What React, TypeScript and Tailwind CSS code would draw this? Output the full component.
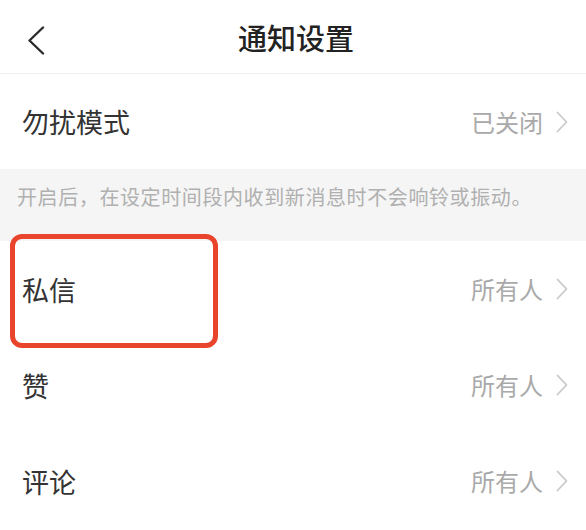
import React from "react";

const Chevron = () => (
  <svg width="12" height="22" viewBox="0 0 12 22" fill="none" className="shrink-0">
    <path d="M1.5 1.5 L10.5 11 L1.5 20.5" stroke="#c9c9c9" strokeWidth="1.8" strokeLinecap="round" strokeLinejoin="round" />
  </svg>
);

const Row = ({ label, value, h }: { label: string; value: string; h: string }) => (
  <div className={`flex items-center justify-between pl-[22px] pr-[18px] ${h}`}>
    <span className="text-[27px] leading-none text-[#333333]">{label}</span>
    <div className="flex items-center gap-[13px]">
      <span className="text-[24px] leading-none text-[#a9a9a9]">{value}</span>
      <Chevron />
    </div>
  </div>
);

export default function App() {
  return (
    <div
      className="relative w-[586px] h-[530px] bg-white overflow-hidden"
      style={{ fontFamily: '"Noto Sans CJK SC", "Noto Sans", sans-serif' }}
    >
      <div className="relative flex items-center justify-center h-[74px] border-b border-[#f2f2f2]">
        <svg width="18" height="30" viewBox="0 0 18 30" fill="none" className="absolute left-[27px] top-[26px]">
          <path d="M16 1.5 L2.5 14.5 L16 27.5" stroke="#2b2b2b" strokeWidth="2.4" strokeLinecap="round" strokeLinejoin="round" />
        </svg>
        <span className="text-[29px] leading-none font-medium text-[#222222] ml-[6px] mt-[1px]">通知设置</span>
      </div>
      <Row label="勿扰模式" value="已关闭" h="h-[95px]" />
      <div className="h-[72px] bg-[#f5f5f5] pl-[17px] pt-[16px]">
        <span className="text-[20px] leading-[24px] text-[#b0b0b0] tracking-[0.6px]">
          开启后，在设定时间段内收到新消息时不会响铃或振动。
        </span>
      </div>
      <Row label="私信" value="所有人" h="h-[96px]" />
      <Row label="赞" value="所有人" h="h-[96px]" />
      <Row label="评论" value="所有人" h="h-[96px]" />
      <div className="absolute left-[10px] top-[234px] w-[208px] h-[114px] border-[5px] border-[#e9442c] rounded-[12px] pointer-events-none" />
    </div>
  );
}
